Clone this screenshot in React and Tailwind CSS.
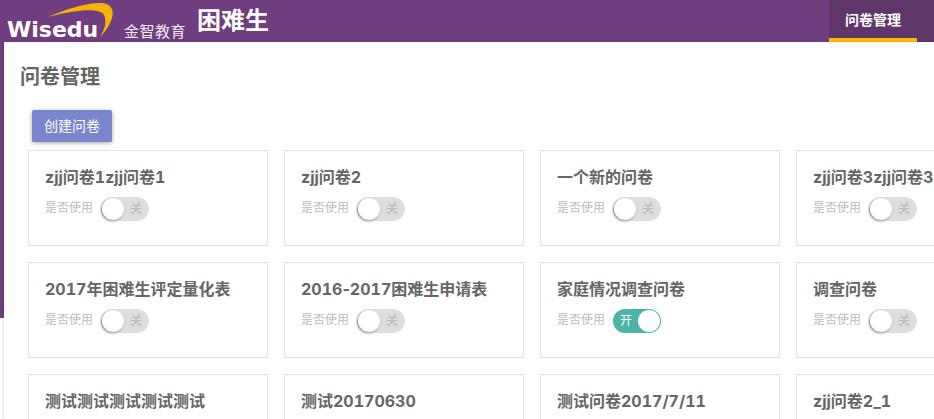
import React from 'react';

const surveys = [
  { id: 1, title: 'zjj问卷1zjj问卷1' },
  { id: 2, title: 'zjj问卷2' },
  { id: 3, title: '一个新的问卷' },
  { id: 4, title: 'zjj问卷3zjj问卷3zjj问卷3' },
  { id: 5, title: '2017年困难生评定量化表' },
  { id: 6, title: <>2016<span className="[font-variant-numeric:normal]">-</span>2017困难生申请表</> },
  { id: 7, title: '家庭情况调查问卷', on: true },
  { id: 8, title: '调查问卷' },
  { id: 9, title: '测试测试测试测试测试' },
  { id: 10, title: '测试20170630' },
  { id: 11, title: '测试问卷2017/7/11' },
  { id: 12, title: 'zjj问卷2_1' },
];

const Toggle = ({ on }) =>
  on ? (
    <div className="flex h-6 w-12 items-center justify-between rounded-full bg-[#4db3a6] pl-[7px] pr-px text-xs text-white">
      <span>开</span>
      <span className="h-[22px] w-[22px] rounded-full bg-white" />
    </div>
  ) : (
    <div className="flex h-6 w-12 items-center justify-between rounded-full bg-[#dedede] pl-px pr-[7px] text-xs text-[#b5b5b5]">
      <span className="h-[22px] w-[22px] rounded-full bg-white shadow-[-1px_1px_3px_rgba(0,0,0,0.4)]" />
      <span>关</span>
    </div>
  );

const SurveyCard = ({ title, on }) => (
  <div className="h-24 w-60 shrink-0 overflow-hidden border border-[#e6e0ea] bg-white pl-4 pt-[15px]">
    <h3
      className="truncate text-base leading-[22px] font-bold text-[#666] tabular-nums"
      style={{ fontFamily: 'Inter, "Noto Sans CJK SC", sans-serif' }}
    >
      {title}
    </h3>
    <div className="mt-[9px] flex items-center gap-2">
      <span className="mb-0.5 text-xs text-[#bdbdbd]">是否使用</span>
      <Toggle on={on} />
    </div>
  </div>
);

export default function App() {
  return (
    <div
      className="relative h-[419px] w-[934px] overflow-hidden bg-white"
      style={{ fontFamily: '"Open Sans", "Noto Sans CJK SC", sans-serif' }}
    >
      {/* purple page background, stops short of the window bottom */}
      <div className="absolute top-0 left-0 h-[318px] w-1 bg-[#6f3d80]" />

      <header className="relative flex h-[42px] items-stretch bg-[#6f3d80]">
        <div className="relative w-[110px]">
          <svg className="absolute top-0 left-0" width="116" height="42" viewBox="0 0 116 42">
            <path d="M48 17 C66 9 88 2 102 3 C112 4 115 11 111 21 C108 28 104 33 100 37 C105 29 107 21 104 15 C100 8 78 9 48 17 Z" fill="#f5b400" />
          </svg>
          <span
            className="absolute top-[17px] left-[7px] text-[22px] leading-[26px] font-bold text-white"
            style={{ fontFamily: '"DejaVu Sans", sans-serif' }}
          >
            Wisedu
          </span>
        </div>
        <span className="mt-[23px] ml-3.5 text-[15px] leading-4 tracking-[0.5px] text-[#eee]">金智教育</span>
        <span className="mt-1.5 ml-[11px] text-2xl leading-7 font-bold text-white">困难生</span>
        <nav className="ml-auto flex w-[105px] bg-[#5e3669]">
          <div className="flex h-[42px] w-[88px] items-center justify-center border-b-4 border-[#ffb900] pt-0.5 text-sm font-bold text-white">
            问卷管理
          </div>
        </nav>
      </header>

      <main className="relative ml-1 h-[377px] bg-white shadow-[-1px_0_2px_rgba(0,0,0,0.12)]">
        <h1 className="pt-[21px] pl-4 text-xl leading-7 font-bold text-[#666]">问卷管理</h1>
        <button className="mt-[19px] ml-7 flex h-8 w-20 items-center justify-center rounded-[2px] bg-[#7986cb] text-sm text-white shadow-[0_1px_4px_rgba(0,0,0,0.35)]">
          创建问卷
        </button>
        <div className="mt-2 ml-6 grid w-[1008px] grid-cols-4 gap-4">
          {surveys.map((s) => (
            <SurveyCard key={s.id} title={s.title} on={s.on} />
          ))}
        </div>
      </main>
    </div>
  );
}
